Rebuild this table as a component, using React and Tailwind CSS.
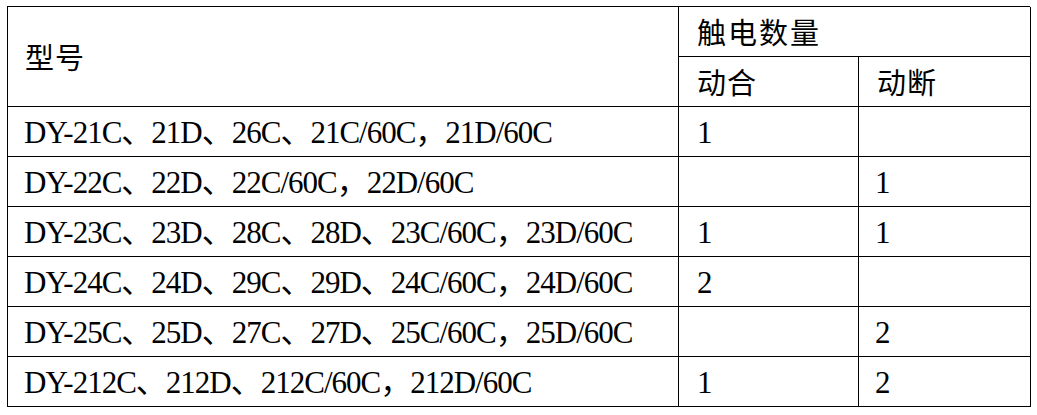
import React from "react";

const rows = [
  ["DY-21C、21D、26C、21C/60C，21D/60C", "1", ""],
  ["DY-22C、22D、22C/60C，22D/60C", "", "1"],
  ["DY-23C、23D、28C、28D、23C/60C，23D/60C", "1", "1"],
  ["DY-24C、24D、29C、29D、24C/60C，24D/60C", "2", ""],
  ["DY-25C、25D、27C、27D、25C/60C，25D/60C", "", "2"],
  ["DY-212C、212D、212C/60C，212D/60C", "1", "2"],
];

export default function App() {
  return (
    <div className="w-[1037px] h-[415px] bg-white pl-[7px] pt-[6px]">
      <div
        className="grid grid-cols-[671px_180px_172px] grid-rows-[repeat(8,50px)] w-[1023px] border-l border-t border-black text-black text-[31px] leading-none"
        style={{ fontFamily: '"Liberation Serif", "Noto Sans CJK SC", serif' }}
      >
        <div className="row-span-2 flex items-center border-r border-b border-black pl-[17px]">
          <span className="font-['Noto_Sans_CJK_SC',sans-serif] text-[29px] tracking-[1px]">型号</span>
        </div>
        <div className="col-span-2 flex items-center border-r border-b border-black pl-[18px]">
          <span className="font-['Noto_Sans_CJK_SC',sans-serif] text-[29px] tracking-[2px]">触电数量</span>
        </div>
        <div className="flex items-center border-r border-b border-black pl-[18px]">
          <span className="font-['Noto_Sans_CJK_SC',sans-serif] text-[29px] tracking-[1px]">动合</span>
        </div>
        <div className="flex items-center border-r border-b border-black pl-[18px]">
          <span className="font-['Noto_Sans_CJK_SC',sans-serif] text-[29px] tracking-[1px]">动断</span>
        </div>
        {rows.map((r, i) => (
          <React.Fragment key={i}>
            <div className="flex items-center border-r border-b border-black pl-[16px] pt-[2px] whitespace-nowrap tracking-[-1px]">
              {r[0]}
            </div>
            <div className="flex items-center border-r border-b border-black pl-[18px] pt-[2px]">
              {r[1]}
            </div>
            <div className="flex items-center border-r border-b border-black pl-[16px] pt-[2px]">
              {r[2]}
            </div>
          </React.Fragment>
        ))}
      </div>
    </div>
  );
}
